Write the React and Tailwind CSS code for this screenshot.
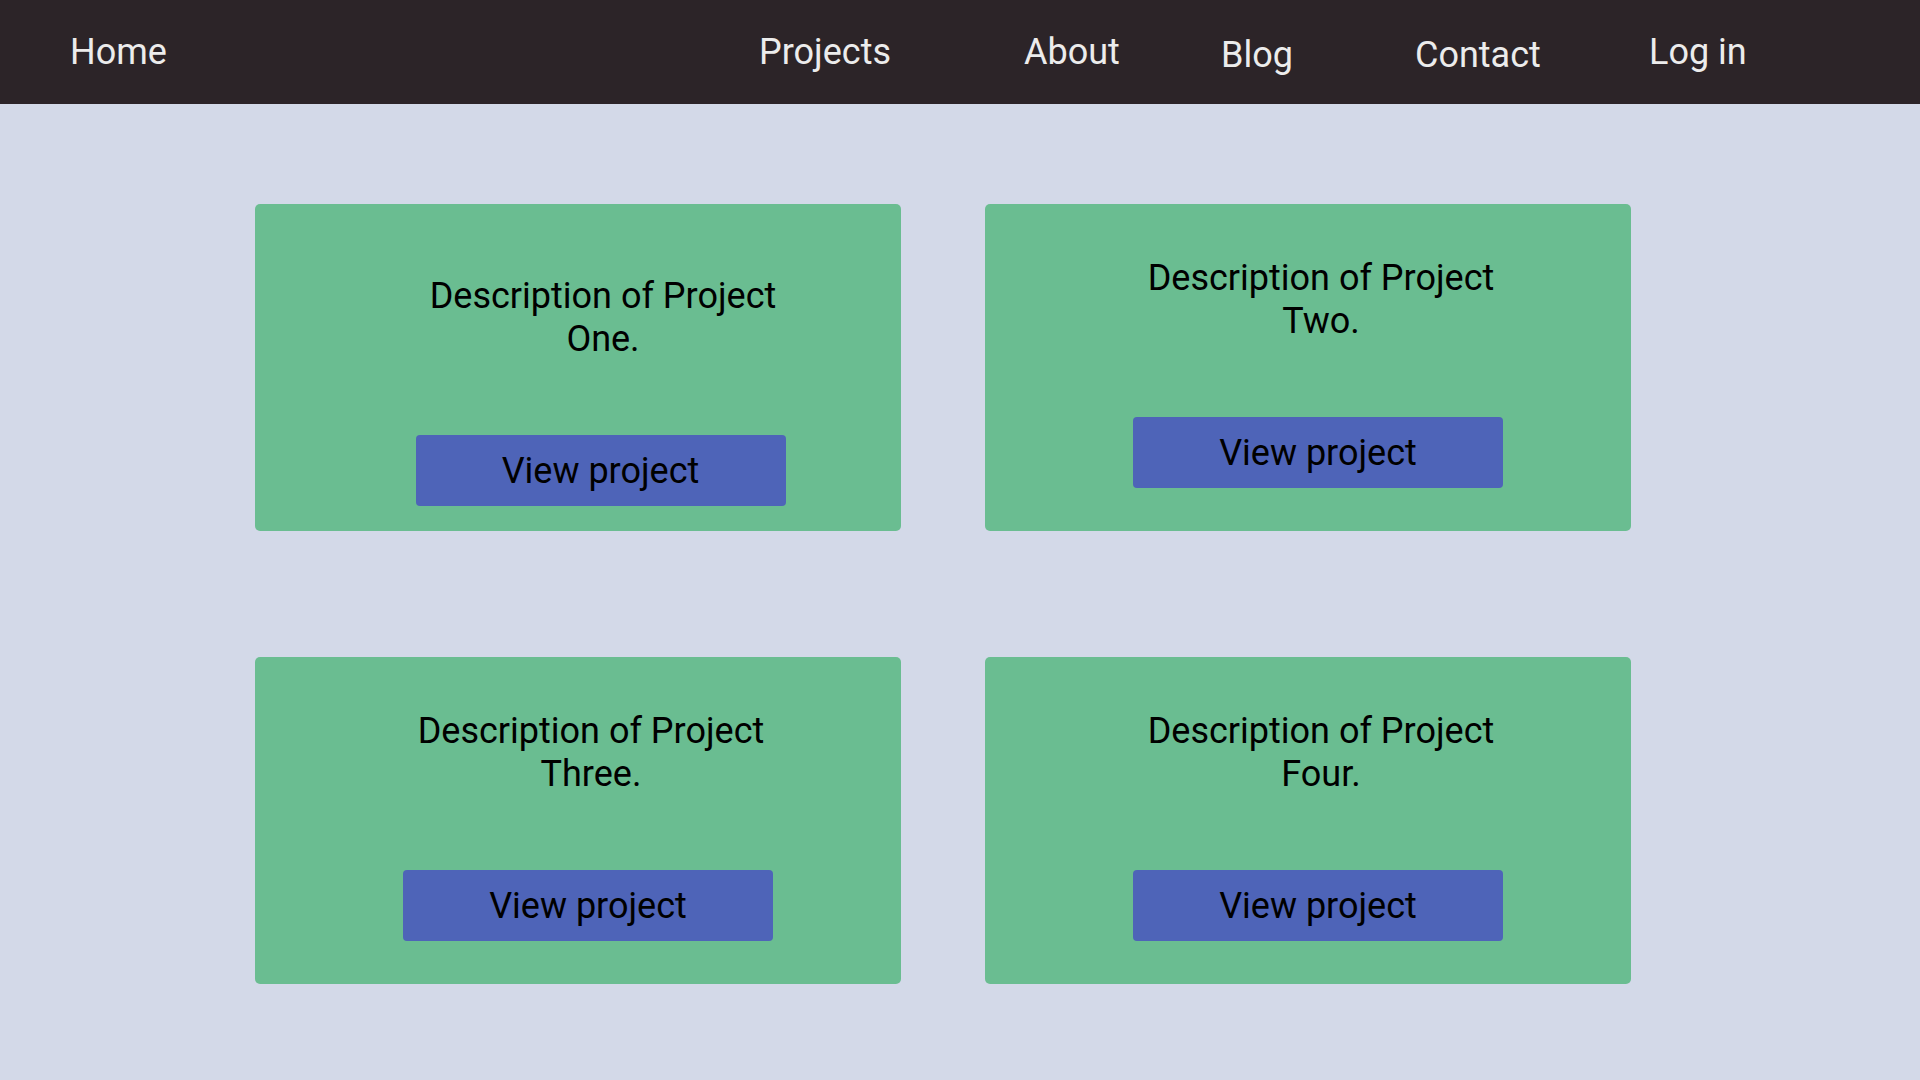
import React from "react";

const navItems = [
  { label: "Home", w: "w-[689px]", pt: "" },
  { label: "Projects", w: "w-[265px]", pt: "" },
  { label: "About", w: "w-[197px]", pt: "" },
  { label: "Blog", w: "w-[194px]", pt: "pt-[5px]" },
  { label: "Contact", w: "w-[234px]", pt: "pt-[5px]" },
  { label: "Log in", w: "w-[120px]", pt: "" },
];

function Card({ name, first }) {
  return (
    <div className="h-[327px] rounded-[5px] bg-[#6abd91] flex flex-col">
      <div
        className={
          first
            ? "pt-[71px] pl-[50px] text-center text-[36px] leading-[43px] text-black"
            : "pt-[53px] pl-[26px] text-center text-[36px] leading-[43px] text-black"
        }
      >
        Description of Project
        <br />
        {name}
      </div>
      <div
        className={
          first
            ? "mt-[74px] pl-[45px] flex justify-center"
            : "mt-[74px] pl-[20px] flex justify-center"
        }
      >
        <button className="w-[370px] h-[71px] rounded-[4px] bg-[#4e64b8] text-black text-[36px] leading-none">
          View project
        </button>
      </div>
    </div>
  );
}

export default function App() {
  return (
    <div
      className="min-h-screen bg-[#d3d9e8]"
      style={{ fontFamily: "Roboto, 'Noto Sans', sans-serif" }}
    >
      <nav className="h-[104px] bg-[#2c2428] flex items-center pl-[70px]">
        {navItems.map((n) => (
          <div
            key={n.label}
            className={`${n.w} ${n.pt} shrink-0 text-[36px] text-[#ececec]`}
          >
            {n.label}
          </div>
        ))}
      </nav>
      <main className="pt-[100px] pl-[255px]">
        <div className="grid grid-cols-[646px_646px] gap-x-[84px] gap-y-[126px]">
          <Card name="One." first />
          <Card name="Two." />
          <Card name="Three." />
          <Card name="Four." />
        </div>
      </main>
    </div>
  );
}
